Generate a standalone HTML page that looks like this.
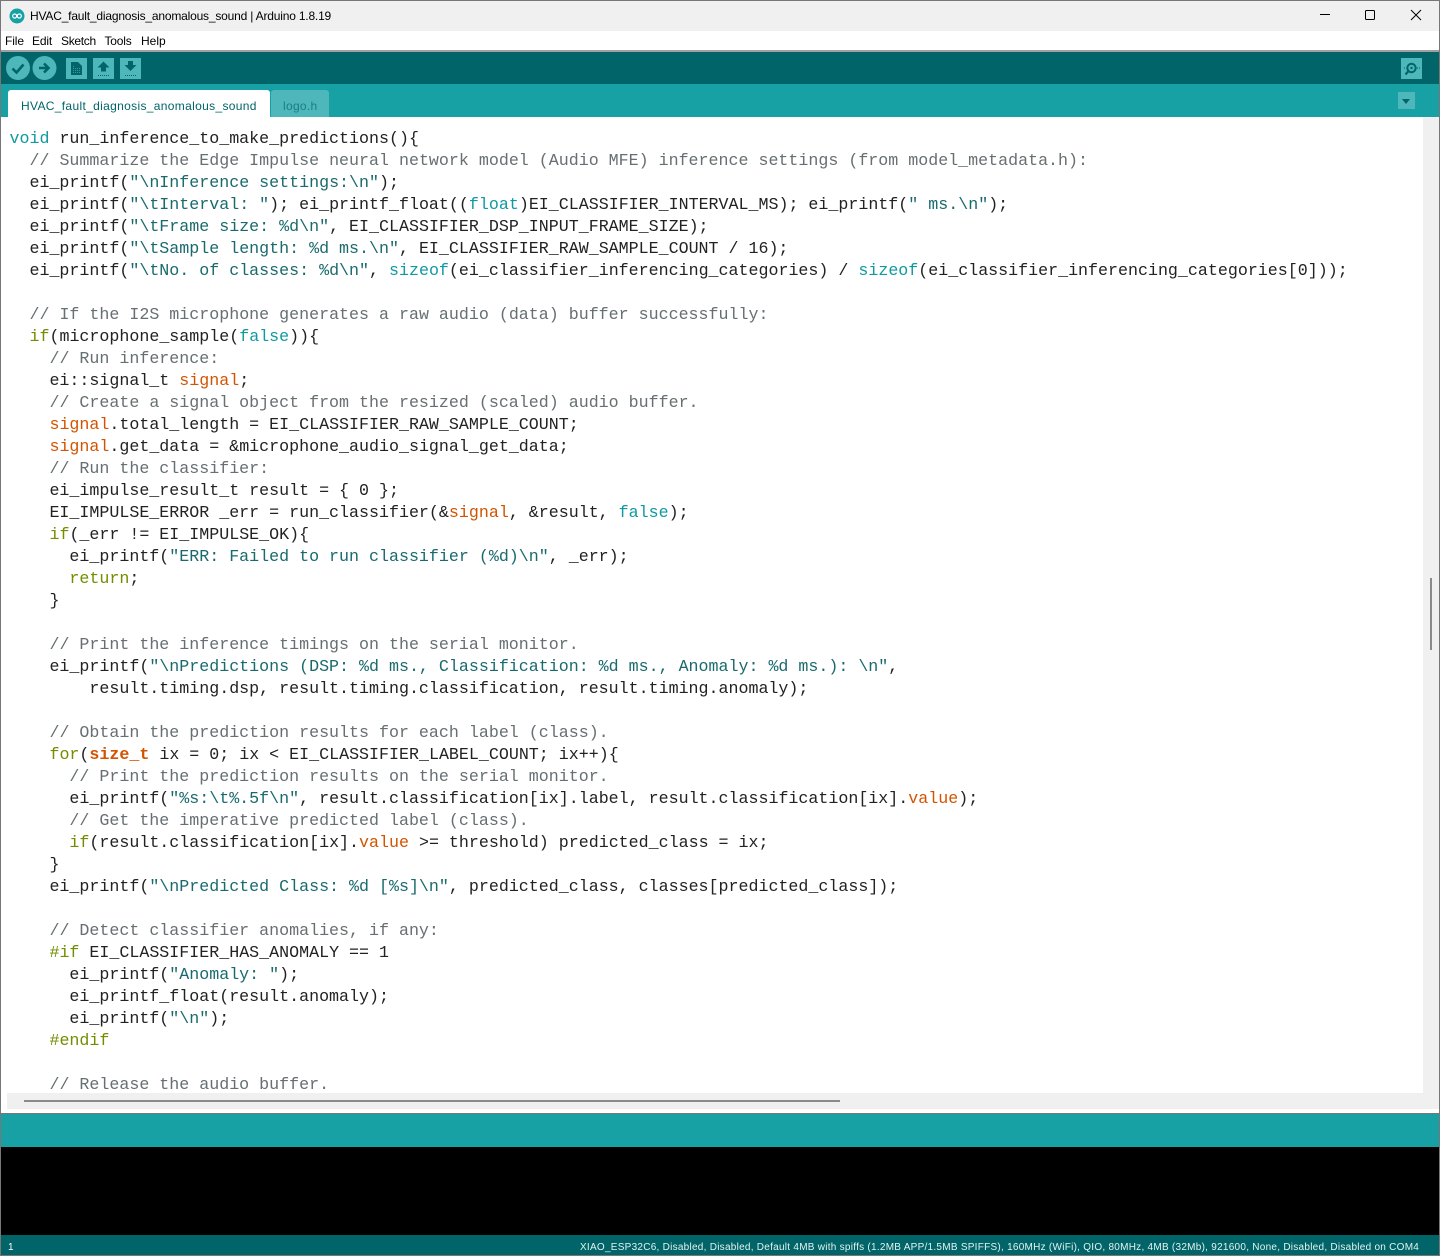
<!DOCTYPE html>
<html><head><meta charset="utf-8"><title>HVAC_fault_diagnosis_anomalous_sound | Arduino 1.8.19</title>
<style>
html,body{margin:0;padding:0;background:#fff;overflow:hidden;width:1440px;height:1256px}
body{position:relative;font-family:"Liberation Sans",sans-serif}
.a{position:absolute}
.t{position:absolute;white-space:pre;font-size:12px;color:#000}
#clip{position:absolute;left:0;top:117px;width:1423px;height:976px;overflow:hidden}
#code{position:absolute;left:9.5px;top:11px;font-family:"Liberation Mono",monospace;font-size:16.65px;line-height:22px;color:#222}
#code div{height:22px;white-space:pre}
.c{color:#666f72}.k{color:#109aa0}.s{color:#1a6a6d}.o{color:#D35400}.b{color:#D35400;font-weight:bold}.g{color:#728E00}
</style></head><body>
<div class="a" style="left:0;top:0;width:1440px;height:31px;background:#f0f0f0"></div>
<svg class="a" style="left:9px;top:8px" width="16" height="16" viewBox="0 0 16 16"><circle cx="8" cy="8" r="7.5" fill="#17A1A5"/><circle cx="5.7" cy="8" r="2" fill="none" stroke="#fff" stroke-width="1.2"/><circle cx="10.3" cy="8" r="2" fill="none" stroke="#fff" stroke-width="1.2"/></svg>
<div class="t" style="left:30px;top:9px;letter-spacing:-.19px">HVAC_fault_diagnosis_anomalous_sound | Arduino 1.8.19</div>
<svg class="a" style="left:1310px;top:0" width="130" height="31" fill="none" stroke="#000" stroke-width="1"><path d="M10 14.5h10"/><rect x="55.5" y="10.500" width="9" height="9" rx="1"/><path d="M101 10l10 10M111 10l-10 10"/></svg>
<div class="t" style="left:5px;top:34px;letter-spacing:-.1px">File</div><div class="t" style="left:32px;top:34px;letter-spacing:-.15px">Edit</div><div class="t" style="left:61px;top:34px;letter-spacing:-.3px">Sketch</div><div class="t" style="left:104.500px;top:34px;letter-spacing:-.2px">Tools</div><div class="t" style="left:141px;top:34px">Help</div>
<div class="a" style="left:0;top:50px;width:1440px;height:2px;background:#a0a0a0"></div>
<div class="a" style="left:0;top:52px;width:1440px;height:32px;background:#006468"></div>
<div class="a" style="left:0;top:84px;width:1440px;height:33px;background:#17A1A5"></div>
<svg class="a" style="left:0;top:52px" width="150" height="32">
<circle cx="18" cy="16" r="12" fill="#4db7bb"/><path d="M12.500 16.500l4 4 7-8" fill="none" stroke="#006468" stroke-width="2.600"/>
<circle cx="44.500" cy="16" r="12" fill="#4db7bb"/><path d="M39 16h8M44 11.500l4.500 4.500-4.500 4.500" fill="none" stroke="#006468" stroke-width="2.600"/>
<rect x="66" y="6" width="21" height="21" fill="#4db7bb"/><path d="M71 10h7l4 4v9H71z" fill="#006468"/><path d="M73.500 14v8M75.500 16v6M77.500 16v6M79.500 16v6" stroke="#4db7bb" stroke-width=".7" stroke-dasharray="1 1"/>
<rect x="93" y="6" width="21" height="21" fill="#4db7bb"/><path d="M103.500 9.500l6 6h-3.500v4h-5v-4h-3.500z" fill="#006468"/><path d="M98 23.500h11" stroke="#006468" stroke-width="1" stroke-dasharray="1 1"/>
<rect x="120" y="6" width="21" height="21" fill="#4db7bb"/><path d="M128 9h5v4h3.500l-6 6-6-6h3.500z" fill="#006468"/><path d="M125 23.500h11" stroke="#006468" stroke-width="1" stroke-dasharray="1 1"/>
</svg>
<svg class="a" style="left:1401px;top:58px" width="21" height="21"><rect width="21" height="21" fill="#4db7bb"/><circle cx="10.500" cy="10" r="4.200" fill="none" stroke="#006468" stroke-width="2"/><circle cx="10.500" cy="10" r="1.200" fill="#006468"/><path d="M7.500 13l-3 3.500" stroke="#006468" stroke-width="2.200"/><path d="M3 10h2M16 10h3" stroke="#006468" stroke-dasharray="1 1"/></svg>
<div class="a" style="left:1398px;top:92px;width:17px;height:17px;background:#4db7bb"></div>
<div class="a" style="left:1402px;top:99px;width:0;height:0;border-left:4.500px solid transparent;border-right:4.500px solid transparent;border-top:5px solid #006468"></div>
<div class="a" style="left:8px;top:90px;width:262px;height:27px;background:#fff;border-radius:3px 3px 0 0"></div>
<div class="a" style="left:271px;top:90px;width:58px;height:27px;background:#4db7bb;border-radius:3px 3px 0 0"></div>
<div class="t" style="left:21px;top:99px;color:#006468;letter-spacing:.33px">HVAC_fault_diagnosis_anomalous_sound</div>
<div class="t" style="left:283px;top:99px;color:#1a7f84;letter-spacing:.3px">logo.h</div>
<div id="clip"><div id="code"><div><span class="k">void</span> run_inference_to_make_predictions(){</div>
<div>  <span class="c">// Summarize the Edge Impulse neural network model (Audio MFE) inference settings (from model_metadata.h):</span></div>
<div>  ei_printf(<span class="s">"\nInference settings:\n"</span>);</div>
<div>  ei_printf(<span class="s">"\tInterval: "</span>); ei_printf_float((<span class="k">float</span>)EI_CLASSIFIER_INTERVAL_MS); ei_printf(<span class="s">" ms.\n"</span>);</div>
<div>  ei_printf(<span class="s">"\tFrame size: %d\n"</span>, EI_CLASSIFIER_DSP_INPUT_FRAME_SIZE);</div>
<div>  ei_printf(<span class="s">"\tSample length: %d ms.\n"</span>, EI_CLASSIFIER_RAW_SAMPLE_COUNT / 16);</div>
<div>  ei_printf(<span class="s">"\tNo. of classes: %d\n"</span>, <span class="k">sizeof</span>(ei_classifier_inferencing_categories) / <span class="k">sizeof</span>(ei_classifier_inferencing_categories[0]));</div>
<div> </div>
<div>  <span class="c">// If the I2S microphone generates a raw audio (data) buffer successfully:</span></div>
<div>  <span class="g">if</span>(microphone_sample(<span class="k">false</span>)){</div>
<div>    <span class="c">// Run inference:</span></div>
<div>    ei::signal_t <span class="o">signal</span>;</div>
<div>    <span class="c">// Create a signal object from the resized (scaled) audio buffer.</span></div>
<div>    <span class="o">signal</span>.total_length = EI_CLASSIFIER_RAW_SAMPLE_COUNT;</div>
<div>    <span class="o">signal</span>.get_data = &amp;microphone_audio_signal_get_data;</div>
<div>    <span class="c">// Run the classifier:</span></div>
<div>    ei_impulse_result_t result = { 0 };</div>
<div>    EI_IMPULSE_ERROR _err = run_classifier(&amp;<span class="o">signal</span>, &amp;result, <span class="k">false</span>);</div>
<div>    <span class="g">if</span>(_err != EI_IMPULSE_OK){</div>
<div>      ei_printf(<span class="s">"ERR: Failed to run classifier (%d)\n"</span>, _err);</div>
<div>      <span class="g">return</span>;</div>
<div>    }</div>
<div> </div>
<div>    <span class="c">// Print the inference timings on the serial monitor.</span></div>
<div>    ei_printf(<span class="s">"\nPredictions (DSP: %d ms., Classification: %d ms., Anomaly: %d ms.): \n"</span>,</div>
<div>        result.timing.dsp, result.timing.classification, result.timing.anomaly);</div>
<div> </div>
<div>    <span class="c">// Obtain the prediction results for each label (class).</span></div>
<div>    <span class="g">for</span>(<span class="b">size_t</span> ix = 0; ix &lt; EI_CLASSIFIER_LABEL_COUNT; ix++){</div>
<div>      <span class="c">// Print the prediction results on the serial monitor.</span></div>
<div>      ei_printf(<span class="s">"%s:\t%.5f\n"</span>, result.classification[ix].label, result.classification[ix].<span class="o">value</span>);</div>
<div>      <span class="c">// Get the imperative predicted label (class).</span></div>
<div>      <span class="g">if</span>(result.classification[ix].<span class="o">value</span> &gt;= threshold) predicted_class = ix;</div>
<div>    }</div>
<div>    ei_printf(<span class="s">"\nPredicted Class: %d [%s]\n"</span>, predicted_class, classes[predicted_class]);</div>
<div> </div>
<div>    <span class="c">// Detect classifier anomalies, if any:</span></div>
<div>    <span class="g">#if</span> EI_CLASSIFIER_HAS_ANOMALY == 1</div>
<div>      ei_printf(<span class="s">"Anomaly: "</span>);</div>
<div>      ei_printf_float(result.anomaly);</div>
<div>      ei_printf(<span class="s">"\n"</span>);</div>
<div>    <span class="g">#endif</span></div>
<div> </div>
<div>    <span class="c">// Release the audio buffer.</span></div></div></div>
<div class="a" style="left:1423px;top:117px;width:16px;height:976px;background:#f0f0f0"></div>
<div class="a" style="left:1430px;top:578px;width:2px;height:72px;background:#8a8a8a"></div>
<div class="a" style="left:0;top:1093px;width:1440px;height:20px;background:#fff"></div>
<div class="a" style="left:7px;top:1093px;width:1433px;height:16px;background:#f0f0f0"></div>
<div class="a" style="left:24px;top:1100px;width:816px;height:2px;background:#8a8a8a"></div>
<div class="a" style="left:0;top:1113px;width:1440px;height:1px;background:#777"></div>
<div class="a" style="left:0;top:1114px;width:1440px;height:33px;background:#17A1A5"></div>
<div class="a" style="left:0;top:1147px;width:1440px;height:88px;background:#000"></div>
<div class="a" style="left:0;top:1235px;width:1440px;height:20px;background:#006468"></div>
<div class="t" style="left:8px;top:1242px;font-size:10px;color:#fff">1</div>
<div class="t" style="left:580px;top:1242px;font-size:10px;color:#e4f2f2;letter-spacing:.263px">XIAO_ESP32C6, Disabled, Disabled, Default 4MB with spiffs (1.2MB APP/1.5MB SPIFFS), 160MHz (WiFi), QIO, 80MHz, 4MB (32Mb), 921600, None, Disabled, Disabled on COM4</div>
<div class="a" style="left:0;top:0;width:1438px;height:1254px;border:1px solid #777;pointer-events:none"></div>
</body></html>
